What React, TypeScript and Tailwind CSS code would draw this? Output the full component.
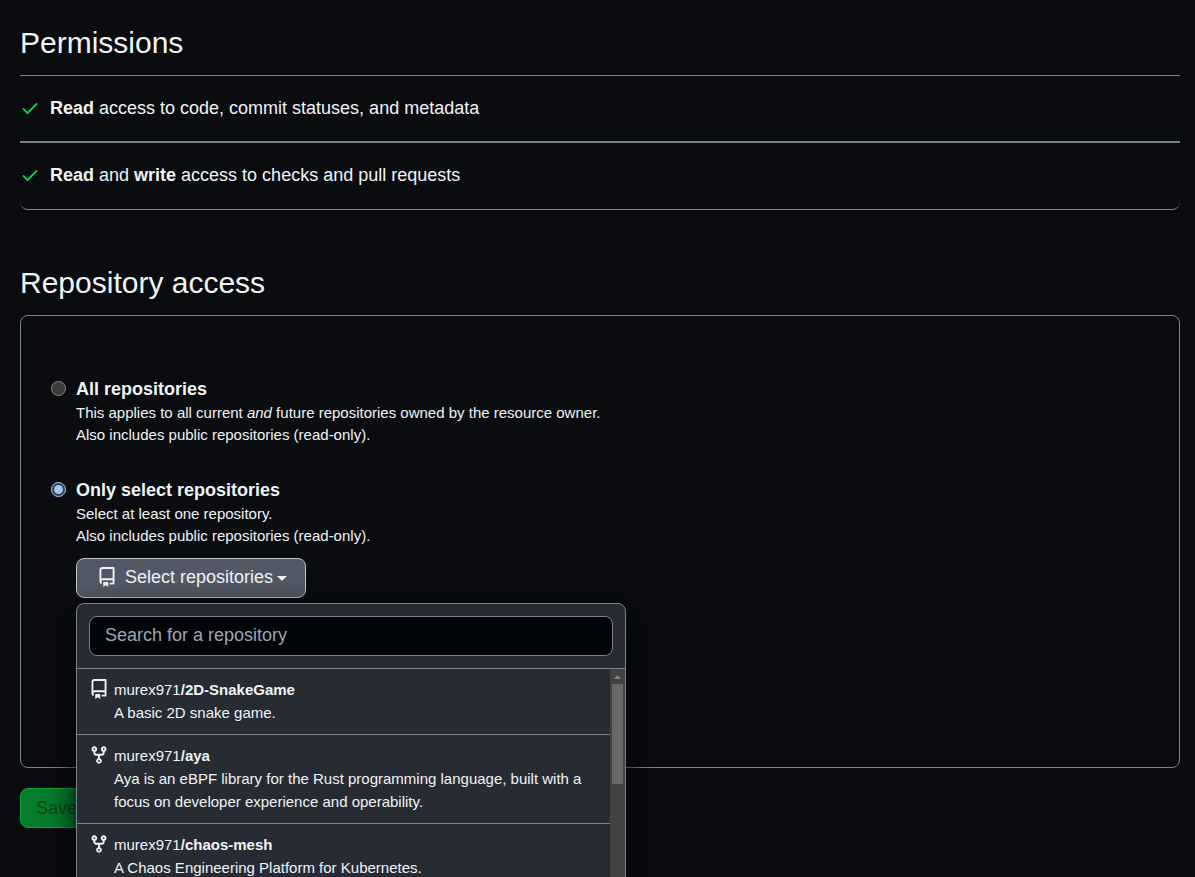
import type { ReactNode } from "react";

const icons = {
  check:
    "M13.78 4.22a.75.75 0 0 1 0 1.06l-7.25 7.25a.75.75 0 0 1-1.06 0L2.22 9.28a.751.751 0 0 1 .018-1.042.751.751 0 0 1 1.042-.018L6 10.94l6.72-6.72a.75.75 0 0 1 1.06 0Z",
  repo: "M2 2.5A2.5 2.5 0 0 1 4.5 0h8.75a.75.75 0 0 1 .75.75v12.5a.75.75 0 0 1-.75.75h-2.5a.75.75 0 0 1 0-1.5h1.75v-2h-8a1 1 0 0 0-.714 1.7.75.75 0 1 1-1.072 1.05A2.495 2.495 0 0 1 2 11.5Zm10.5-1h-8a1 1 0 0 0-1 1v6.708A2.486 2.486 0 0 1 4.5 9h8ZM5 12.25a.25.25 0 0 1 .25-.25h3.5a.25.25 0 0 1 .25.25v3.25a.25.25 0 0 1-.4.2l-1.45-1.087a.249.249 0 0 0-.3 0L5.4 15.7a.25.25 0 0 1-.4-.2Z",
  fork: "M5 5.372v.878c0 .414.336.75.75.75h4.5a.75.75 0 0 0 .75-.75v-.878a2.25 2.25 0 1 1 1.5 0v.878a2.25 2.25 0 0 1-2.25 2.25h-1.5v2.128a2.251 2.251 0 1 1-1.5 0V8.5h-1.5A2.25 2.25 0 0 1 3.5 6.25v-.878a2.25 2.25 0 1 1 1.5 0ZM5 3.25a.75.75 0 1 0-1.5 0 .75.75 0 0 0 1.5 0Zm6.75.75a.75.75 0 1 0 0-1.5.75.75 0 0 0 0 1.5Zm-3 8.75a.75.75 0 1 0-1.5 0 .75.75 0 0 0 1.5 0Z",
};

type IconName = keyof typeof icons;

const Icon = ({ name, className = "" }: { name: IconName; className?: string }) => (
  <svg
    viewBox="0 0 16 16"
    fill="currentColor"
    aria-hidden="true"
    className={`size-5 shrink-0 ${className}`}
  >
    <path d={icons[name]} />
  </svg>
);

const repos: { icon: IconName; name: string; description: string }[] = [
  { icon: "repo", name: "2D-SnakeGame", description: "A basic 2D snake game." },
  {
    icon: "fork",
    name: "aya",
    description:
      "Aya is an eBPF library for the Rust programming language, built with a focus on developer experience and operability.",
  },
  {
    icon: "fork",
    name: "chaos-mesh",
    description: "A Chaos Engineering Platform for Kubernetes.",
  },
];

const Permission = ({ children }: { children: ReactNode }) => (
  <li className="flex gap-[10px] py-5 leading-[25px]">
    <Icon name="check" className="mt-[2px] text-[#09d84f]" />
    <span>{children}</span>
  </li>
);

const AccessOption = ({
  id,
  title,
  checked,
  children,
}: {
  id: string;
  title: string;
  checked?: boolean;
  children: ReactNode;
}) => (
  <div className="flex gap-[10px]">
    <input
      type="radio"
      id={id}
      name="access"
      defaultChecked={checked}
      className="mt-[5px] size-[15px] shrink-0 scheme-dark"
    />
    <div>
      <label htmlFor={id} className="block leading-[26px] font-bold">
        {title}
      </label>
      <div className="text-[15px] leading-[22px]">{children}</div>
    </div>
  </div>
);

const RepoMenu = () => (
  <div className="absolute top-full left-0 z-10 mt-[5px] w-[550px] overflow-hidden rounded-t-lg border border-[#7a828e] bg-[#272b33] shadow-[0_10px_30px_#010409]">
    <div className="border-b border-[#7a828e] p-3">
      <input
        type="text"
        aria-label="Search for a repository"
        placeholder="Search for a repository"
        className="block h-10 w-full rounded-lg border border-[#7a828e] bg-[#010409] px-[15px] pb-[2px] placeholder:text-[#9ea7b3]"
      />
    </div>
    <div className="flex h-[375px]">
      <ul className="flex-1">
        {repos.map((repo) => (
          <li key={repo.name} className="border-b border-[#7a828e]">
            <button
              type="button"
              className="flex w-full gap-[5px] py-[10px] pr-5 pl-3 text-left text-[15px]"
            >
              <Icon name={repo.icon} />
              <span>
                <span className="block leading-[22px]">
                  murex971<b>/{repo.name}</b>
                </span>
                <span className="block leading-[23px]">{repo.description}</span>
              </span>
            </button>
          </li>
        ))}
      </ul>
      <div className="flex w-[15px] flex-col items-center bg-[#424242]">
        <svg viewBox="0 0 15 15" className="size-[15px]" fill="#868686" aria-hidden="true">
          <path d="M4 10h7L7.500 6z" />
        </svg>
        <div className="h-[100px] w-[11px] bg-[#686868]" />
      </div>
    </div>
  </div>
);

const App = () => {
  return (
    <main className="relative min-h-screen overflow-hidden bg-[#0a0c10] py-5 pr-[15px] pl-5 font-['Liberation_Sans',Arial,sans-serif] text-[18px] text-[#f0f3f6]">
      <section>
        <h2 className="pb-[10px] text-[30px] leading-[45px]">Permissions</h2>
        <ul className="divide-y-2 divide-[#7a828e] border-t border-[#7a828e]">
          <Permission>
            <b>Read</b> access to code, commit statuses, and metadata
          </Permission>
          <Permission>
            <b>Read</b> and <b>write</b> access to checks and pull requests
          </Permission>
        </ul>
        <div className="-mt-[6px] h-2 rounded-b-lg border-b border-[#7a828e]" />
      </section>

      <section className="mt-[50px]">
        <h2 className="pb-[10px] text-[30px] leading-[45px]">Repository access</h2>
        <div className="rounded-lg border border-[#7a828e] px-[30px] pt-[60px] pb-[169px]">
          <AccessOption id="all" title="All repositories">
            <p>
              This applies to all current <i>and</i> future repositories owned by the resource
              owner.
            </p>
            <p>Also includes public repositories (read-only).</p>
          </AccessOption>
          <div className="mt-[31px]">
            <AccessOption id="selected" title="Only select repositories" checked>
              <p>Select at least one repository.</p>
              <p>Also includes public repositories (read-only).</p>
            </AccessOption>
            <div className="relative mt-[11px] ml-[25px] w-fit">
              <button
                type="button"
                aria-haspopup="menu"
                aria-expanded="true"
                className="flex h-10 w-[230px] items-center rounded-lg border border-[#bdc4cc] bg-[#525964] px-5 pb-[2px] whitespace-nowrap"
              >
                <Icon name="repo" />
                <span className="ml-2">Select repositories</span>
                <span className="mt-[3px] ml-1 border-x-[5px] border-t-[5px] border-x-transparent border-t-current" />
              </button>
              <RepoMenu />
            </div>
          </div>
        </div>
      </section>

      <button
        type="submit"
        disabled
        className="mt-5 h-10 rounded-lg border border-[#09a83a] bg-[#067d2b] px-[15px] text-[#06481b]"
      >
        Save
      </button>
    </main>
  );
};

export default App;
